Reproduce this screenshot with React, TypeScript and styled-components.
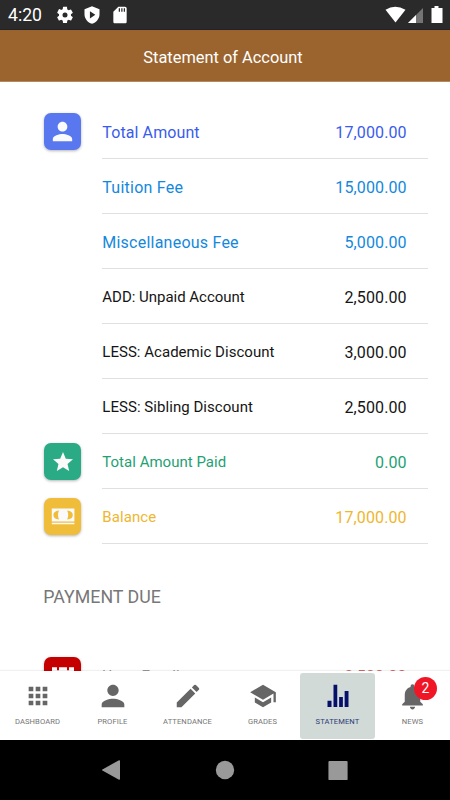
import React from "react";
import styled, { createGlobalStyle } from "styled-components";

const GlobalStyle = createGlobalStyle`
  * { box-sizing: border-box; }
  body { margin: 0; background: #fff; font-family: Roboto, "Noto Sans", sans-serif; }
`;

const Screen = styled.div`
  width: 450px;
  height: 800px;
  display: flex;
  flex-direction: column;
  overflow: hidden;
  background: #fff;
`;

const StatusBar = styled.div`
  height: 30px;
  flex: none;
  display: flex;
  align-items: center;
  background: #2a2a2a;
  border-bottom: 1px solid #202327;
  padding: 1px 7px 0 8px;
  color: #fff;
`;

const Clock = styled.span`
  width: 46.5px;
  font-size: 17.6px;
  font-weight: 400;
  line-height: 28px;
`;

const StatusIcons = styled.div`
  display: flex;
  align-items: center;
  gap: 7.5px;
`;

const SignalIcons = styled.div`
  margin-left: auto;
  display: flex;
  align-items: center;
`;

const Header = styled.header`
  height: 52px;
  flex: none;
  display: flex;
  align-items: center;
  justify-content: center;
  padding: 3px 4px 0 0;
  background: #9b642e;
  border-bottom: 1px solid #b58a62;
  color: #fff;
  font-size: 16.4px;
`;

const Content = styled.main`
  flex: 1;
  min-height: 0;
  overflow: hidden;
  padding-top: 22px;
`;

const Row = styled.div`
  height: 55px;
  display: flex;
  padding: 0 22px 0 44px;
`;

const Leading = styled.div`
  width: 58px;
  flex: none;
  padding-top: 9px;
`;

const Tile = styled.div<{ $color: string }>`
  width: 37px;
  height: 37px;
  display: flex;
  align-items: center;
  justify-content: center;
  border-radius: 7px;
  background: ${(p) => p.$color};
  color: #fafafa;
  box-shadow: 0 1px 3px rgba(0, 0, 0, 0.3);
`;

const RowBody = styled.div`
  flex: 1;
  display: flex;
  align-items: flex-start;
  justify-content: space-between;
  padding: 18px 21.3px 0 0.3px;
  border-bottom: 1px solid #e0e0e0;
`;

const Label = styled.span<{ $size: number; $spacing: number; $color: string }>`
  font-size: ${(p) => p.$size}px;
  line-height: ${(p) => p.$size + 5}px;
  letter-spacing: ${(p) => p.$spacing}px;
  color: ${(p) => p.$color};
  white-space: nowrap;
`;

const Amount = styled.span<{ $color: string }>`
  font-size: 16px;
  line-height: 21px;
  letter-spacing: 0.12px;
  color: ${(p) => p.$color};
`;

const SectionTitle = styled.h2`
  height: 104px;
  margin: 0;
  padding: 42px 0 0 43.3px;
  font-size: 17.8px;
  line-height: 22px;
  font-weight: 400;
  color: #777;
`;

const TabBar = styled.nav`
  height: 69px;
  flex: none;
  display: grid;
  grid-template-columns: repeat(6, 75px);
  padding: 2px 0 1px;
  background: #fff;
  box-shadow: 0 -1px 1px rgba(0, 0, 0, 0.06);
  z-index: 1;
`;

const Tab = styled.div<{ $active?: boolean }>`
  display: flex;
  flex-direction: column;
  align-items: center;
  padding-top: 8px;
  border-radius: 3px;
  color: ${(p) => (p.$active ? "#06106a" : "#666")};
  background: ${(p) => (p.$active ? "#d1dad7" : "transparent")};
`;

const TabIcon = styled.div`
  position: relative;
  height: 30px;
  display: flex;
  align-items: center;
`;

const TabLabel = styled.span<{ $active?: boolean }>`
  margin-top: 6px;
  font-size: 7.6px;
  letter-spacing: 0.1px;
  line-height: 10px;
  color: ${(p) => (p.$active ? "#2c3a78" : "#757575")};
`;

const Badge = styled.span`
  position: absolute;
  left: 17px;
  top: -4px;
  width: 23px;
  height: 23px;
  border-radius: 50%;
  background: #f01626;
  color: #fff;
  font-size: 14px;
  line-height: 23px;
  text-align: center;
`;

const NavBar = styled.div`
  height: 60px;
  flex: none;
  display: grid;
  grid-template-columns: repeat(3, 113px);
  justify-content: center;
  align-items: center;
  justify-items: center;
  background: #000;
  color: #999;
`;

const Svg = styled.svg`
  display: block;
  flex: none;
  fill: currentColor;
`;

const Glyph = ({ d, size = 30, height }: { d: string; size?: number; height?: number }) => (
  <Svg width={size} height={height ?? size} viewBox="0 0 24 24" preserveAspectRatio="none">
    <path fillRule="evenodd" d={d} />
  </Svg>
);

const PERSON = "M12 12c2.21 0 4-1.79 4-4s-1.79-4-4-4-4 1.79-4 4 1.79 4 4 4zm0 2c-2.67 0-8 1.34-8 4v2h16v-2c0-2.66-5.33-4-8-4z";
const STAR = "M12 17.27L18.18 21l-1.64-7.03L22 9.24l-7.19-.61L12 2 9.19 8.63 2 9.24l5.46 4.73L5.82 21z";
const CASH = "M.8 3.6h22.6v12.8H.8zM8 5.4Q2.4 6 2.4 10T8 14.6Q6 10 8 5.4zM16.2 5.4Q21.8 6 21.8 10T16.2 14.6Q18.2 10 16.2 5.4zM.8 17.7h22.6v1.6H.8z";
const CALENDAR = "M1 3.2h5v3h2v-3h8v3h2v-3h5V21H1zM3 9h18v10H3z";
const GRID = "M4 4h4v4H4zM10 4h4v4h-4zM16 4h4v4h-4zM4 10h4v4H4zM10 10h4v4h-4zM16 10h4v4h-4zM4 16h4v4H4zM10 16h4v4h-4zM16 16h4v4h-4z";
const PENCIL = "M3 17.25V21h3.75L17.81 9.94l-3.75-3.75L3 17.25zM20.71 7.04a1 1 0 0 0 0-1.41l-2.34-2.34a1 1 0 0 0-1.41 0l-1.83 1.83 3.75 3.75 1.83-1.83z";
const SCHOOL = "M5 13.18v4L12 21l7-3.82v-4L12 17l-7-3.82zM12 3L1 9l11 6 9-4.91V17h2V9L12 3z";
const BELL = "M12 22c1.1 0 2-.9 2-2h-4c0 1.1.9 2 2 2zm6-6v-5c0-3.07-1.64-5.64-4.5-6.32V4a1.5 1.5 0 0 0-3 0v.68C7.63 5.36 6 7.92 6 11v5l-2 2v1h16v-1z";
const BARS = "M3.6 15.8h3.2v5H3.6zM8.4 3h3v17.8h-3zM12.9 12.8h3v8h-3zM17.3 8h3.1v12.8h-3.1z";
const GEAR = "M19.14 12.94c.04-.3.06-.61.06-.94s-.02-.64-.07-.94l2.03-1.58a.5.5 0 0 0 .12-.61l-1.92-3.32a.49.49 0 0 0-.59-.22l-2.39.96c-.5-.38-1.03-.7-1.62-.94l-.36-2.54A.48.48 0 0 0 13.92 2h-3.84a.47.47 0 0 0-.47.41l-.36 2.54c-.59.24-1.13.57-1.62.94l-2.39-.96a.47.47 0 0 0-.59.22L2.74 8.87a.47.47 0 0 0 .12.61l2.03 1.58c-.05.3-.09.63-.09.94s.02.64.07.94l-2.03 1.58a.5.5 0 0 0-.12.61l1.92 3.32c.12.22.37.29.59.22l2.39-.96c.5.38 1.03.7 1.62.94l.36 2.54c.05.24.24.41.48.41h3.84c.24 0 .44-.17.47-.41l.36-2.54c.59-.24 1.13-.56 1.62-.94l2.39.96c.22.08.47 0 .59-.22l1.92-3.32a.47.47 0 0 0-.12-.61zM12 15a3 3 0 1 1 0-6 3 3 0 0 1 0 6z";
const SHIELD = "M12 1.5L3 5v6c0 5.3 3.84 9.9 9 11.5 5.16-1.6 9-6.2 9-11.5V5zM9.5 7.5l6.5 4.3-6.5 4.3z";
const SD = "M18 2h-8L4 8v12c0 1.1.9 2 2 2h12c1.1 0 2-.9 2-2V4c0-1.1-.9-2-2-2zm-6 6h-1.5V4H12zm3 0h-1.5V4H15zm3 0h-1.5V4H18z";
const BACK = "M19 2.2Q20 2 20 3v18q0 1-1 .8L2.4 12.6q-.8-.6 0-1.2z";
const HOME = "M12 2a10 10 0 1 0 0 20 10 10 0 0 0 0-20z";
const RECENTS = "M2.5 2h18q1 0 1 1v18q0 1-1 1h-18q-1 0-1-1V3q0-1 1-1z";

type Item = {
  label: string;
  amount: string;
  color: string;
  amountColor?: string;
  size: number;
  spacing: number;
  tile?: string;
  icon?: string;
  iconSize?: number;
};

const items: Item[] = [
  { label: "Total Amount", amount: "17,000.00", color: "#3a5cec", size: 16, spacing: 0.1, tile: "#5978f0", icon: PERSON, iconSize: 29 },
  { label: "Tuition Fee", amount: "15,000.00", color: "#1488dc", size: 16, spacing: 0.25 },
  { label: "Miscellaneous Fee", amount: "5,000.00", color: "#1488dc", size: 16, spacing: 0.23 },
  { label: "ADD: Unpaid Account", amount: "2,500.00", color: "#151515", size: 15, spacing: -0.02 },
  { label: "LESS: Academic Discount", amount: "3,000.00", color: "#151515", size: 15, spacing: 0.03 },
  { label: "LESS: Sibling Discount", amount: "2,500.00", color: "#151515", size: 15, spacing: 0.05 },
  { label: "Total Amount Paid", amount: "0.00", color: "#1fa174", size: 15, spacing: 0.02, tile: "#2aab86", icon: STAR, iconSize: 24 },
  { label: "Balance", amount: "17,000.00", color: "#efb630", size: 15, spacing: 0.08, tile: "#f0bd3b", icon: CASH, iconSize: 24 },
];

const due: Item = {
  label: "Upon Enrollment",
  amount: "2,500.00",
  color: "#999",
  amountColor: "#d66",
  size: 15,
  spacing: 0.1,
  tile: "#c40000",
  icon: CALENDAR,
  iconSize: 24,
};

const StatementRow = ({ item }: { item: Item }) => (
  <Row>
    <Leading>
      {item.tile && item.icon && (
        <Tile $color={item.tile}>
          <Glyph d={item.icon} size={item.iconSize} />
        </Tile>
      )}
    </Leading>
    <RowBody>
      <Label $size={item.size} $spacing={item.spacing} $color={item.color}>{item.label}</Label>
      <Amount $color={item.amountColor ?? item.color}>{item.amount}</Amount>
    </RowBody>
  </Row>
);

type TabItem = { label: string; icon: string; size: number; height?: number; active?: boolean; badge?: string };

const tabs: TabItem[] = [
  { label: "DASHBOARD", icon: GRID, size: 28 },
  { label: "PROFILE", icon: PERSON, size: 34 },
  { label: "ATTENDANCE", icon: PENCIL, size: 30 },
  { label: "GRADES", icon: SCHOOL, size: 28, height: 30 },
  { label: "STATEMENT", icon: BARS, size: 30, active: true },
  { label: "NEWS", icon: BELL, size: 31, badge: "2" },
];

export default function App() {
  return (
    <Screen>
      <GlobalStyle />
      <StatusBar>
        <Clock>4:20</Clock>
        <StatusIcons>
          <Glyph d={GEAR} size={20} />
          <Glyph d={SHIELD} size={20} />
          <Glyph d={SD} size={20} />
        </StatusIcons>
        <SignalIcons>
          <Svg width="58" height="18" viewBox="0 0 58 18">
            <path d="M0.5 3.8Q10-2.5 20.5 3.8L10.5 16.5Z" />
            <path d="M38 2V17H23Z" fill="#747474" />
            <path d="M31 9V17H23Z" />
            <path d="M46.5 2h3V0h4v2h4v15h-11z" />
          </Svg>
        </SignalIcons>
      </StatusBar>
      <Header>Statement of Account</Header>
      <Content>
        {items.map((item) => <StatementRow key={item.label} item={item} />)}
        <SectionTitle>PAYMENT DUE</SectionTitle>
        <StatementRow item={due} />
      </Content>
      <TabBar>
        {tabs.map((tab) => (
          <Tab key={tab.label} $active={tab.active}>
            <TabIcon>
              <Glyph d={tab.icon} size={tab.size} height={tab.height} />
              {tab.badge && <Badge>{tab.badge}</Badge>}
            </TabIcon>
            <TabLabel $active={tab.active}>{tab.label}</TabLabel>
          </Tab>
        ))}
      </TabBar>
      <NavBar>
        <Glyph d={BACK} size={24} />
        <Glyph d={HOME} size={22} />
        <Glyph d={RECENTS} size={23} />
      </NavBar>
    </Screen>
  );
}
